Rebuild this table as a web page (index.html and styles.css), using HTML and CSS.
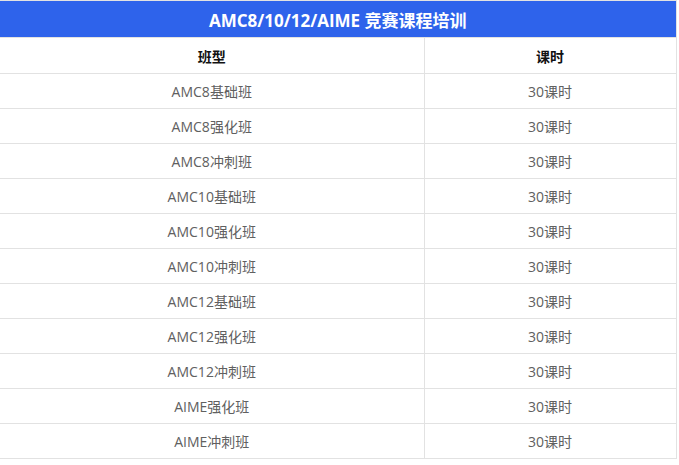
FILE: index.html
```html
<!DOCTYPE html>
<html lang="zh">
<head>
<meta charset="utf-8">
<link rel="stylesheet" href="styles.css">
</head>
<body>
<table class="course">
  <colgroup><col class="col1"><col class="col2"></colgroup>
  <thead>
    <tr class="title-row"><th colspan="2" class="title">AMC8/10/12/AIME 竞赛课程培训</th></tr>
    <tr class="head-row"><th>班型</th><th>课时</th></tr>
  </thead>
  <tbody>
    <tr><td>AMC8基础班</td><td>30课时</td></tr>
    <tr><td>AMC8强化班</td><td>30课时</td></tr>
    <tr><td>AMC8冲刺班</td><td>30课时</td></tr>
    <tr><td>AMC10基础班</td><td>30课时</td></tr>
    <tr><td>AMC10强化班</td><td>30课时</td></tr>
    <tr><td>AMC10冲刺班</td><td>30课时</td></tr>
    <tr><td>AMC12基础班</td><td>30课时</td></tr>
    <tr><td>AMC12强化班</td><td>30课时</td></tr>
    <tr><td>AMC12冲刺班</td><td>30课时</td></tr>
    <tr><td>AIME强化班</td><td>30课时</td></tr>
    <tr><td>AIME冲刺班</td><td>30课时</td></tr>
  </tbody>
</table>
</body>
</html>
```
FILE: styles.css
```css
html, body {
  margin: 0;
  padding: 0;
  background: #ffffff;
}
body {
  font-family: "Open Sans", "Noto Sans CJK SC", sans-serif;
  font-size: 14px;
}
.course {
  width: 676px;
  border-collapse: collapse;
  table-layout: fixed;
  border-top: 1px solid #e2e2e2;
}
.col1 { width: 424px; }
.col2 { width: 252px; }
.course th, .course td {
  padding: 0;
  text-align: center;
  vertical-align: middle;
  border-bottom: 1px solid #e2e2e2;
  border-right: 1px solid #e2e2e2;
}
.title {
  height: 36px;
  background: #2e63eb;
  color: #ffffff;
  font-size: 17px;
  font-weight: 700;
}
.head-row th {
  height: 35px;
  color: #111111;
  font-weight: 600;
  font-size: 14px;
}
.course td {
  height: 34px;
  color: #606060;
}
```
